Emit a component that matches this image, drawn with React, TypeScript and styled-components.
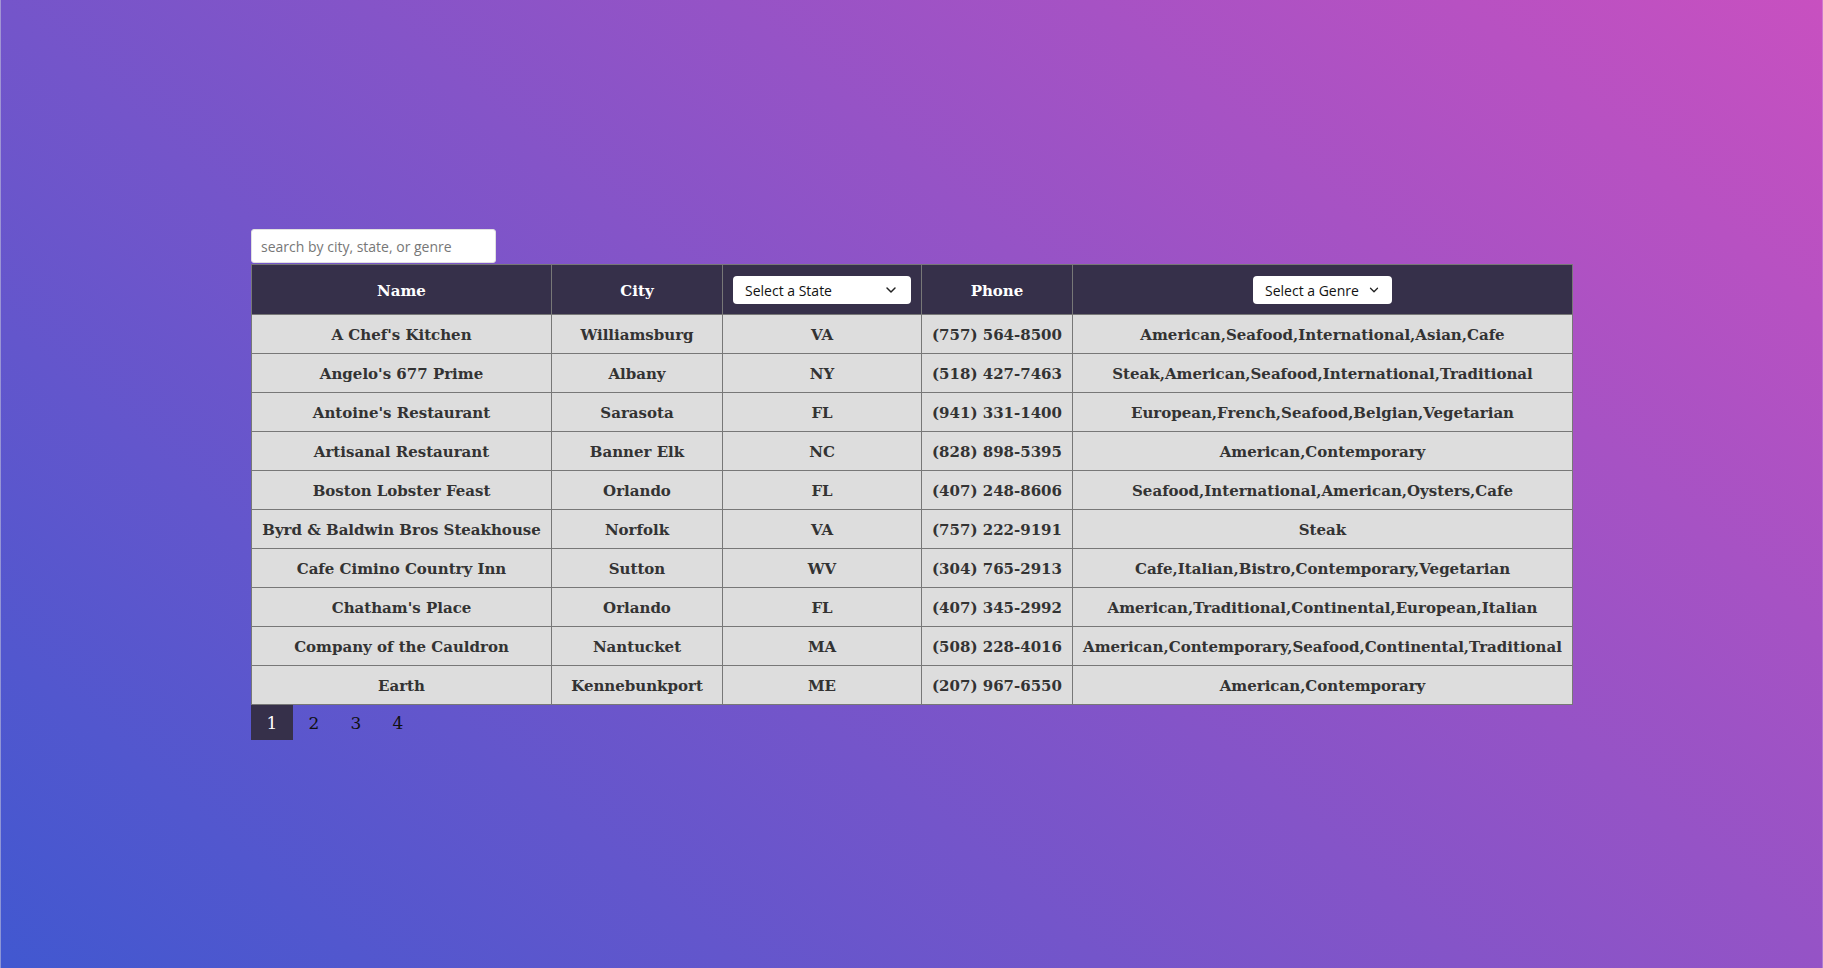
import React, { useState } from "react";
import styled, { createGlobalStyle } from "styled-components";
import { ChevronDown } from "lucide-react";

const GlobalStyle = createGlobalStyle`
  * { box-sizing: border-box; }
  html, body { margin: 0; padding: 0; }
  body {
    font-family: "DejaVu Serif", serif;
    min-height: 100vh;
    background: linear-gradient(41deg, #4158d0 0%, #c850c0 100%);
    background-attachment: fixed;
  }
`;

const Page = styled.div`
  min-height: 100vh;
  padding-top: 229px;
  display: flex;
  justify-content: center;
  border-left: 1px solid rgba(200, 200, 220, 0.55);
  border-right: 1px solid rgba(220, 200, 230, 0.35);
`;

const Container = styled.div`
  width: 1321px;
  display: flex;
  flex-direction: column;
  align-items: flex-start;
`;

const SearchInput = styled.input`
  width: 245px;
  height: 34px;
  border: 1px solid #e0e0e0;
  border-radius: 3px;
  background: #fff;
  padding: 0 9px;
  font-family: "Open Sans", "Noto Sans", sans-serif;
  font-size: 14px;
  color: #222;
  outline: none;
  margin-bottom: 1px;
  &::placeholder {
    color: #777;
  }
`;

const Table = styled.table`
  width: 1321px;
  border-collapse: collapse;
  table-layout: fixed;
`;

const HeadCell = styled.th<{ $w: number }>`
  width: ${(p) => p.$w}px;
  height: 50px;
  background: #36304a;
  color: #fff;
  font-family: "DejaVu Serif", serif;
  font-weight: bold;
  font-size: 15px;
  line-height: 18px;
  padding: 11px 10px 9px;
  border: 1px solid #777;
  text-align: center;
  vertical-align: middle;
`;

const Cell = styled.td`
  background: #dddddd;
  color: #333;
  font-family: "DejaVu Serif", serif;
  font-weight: bold;
  font-size: 15px;
  line-height: 18px;
  padding: 11px 4px 9px;
  border: 1px solid #777;
  text-align: center;
  white-space: nowrap;
`;

const SelectWrap = styled.div<{ $w?: number }>`
  position: relative;
  display: inline-block;
  width: ${(p) => (p.$w ? `${p.$w}px` : "100%")};
  height: 28px;
  margin-top: -1px;
  vertical-align: middle;
`;

const Select = styled.select`
  appearance: none;
  -webkit-appearance: none;
  width: 100%;
  height: 28px;
  border: none;
  border-radius: 4px;
  background: #fff;
  color: #111;
  font-family: "Open Sans", "Noto Sans", sans-serif;
  font-size: 14px;
  padding: 0 30px 0 12px;
  outline: none;
  display: block;
`;

const Chevron = styled.span<{ $right: number }>`
  position: absolute;
  right: ${(p) => p.$right}px;
  top: 50%;
  transform: translateY(-50%);
  display: flex;
  align-items: center;
  pointer-events: none;
  color: #222;
`;

const Pager = styled.ul`
  list-style: none;
  margin: 0;
  padding: 0;
  display: flex;
`;

const PageItem = styled.li<{ $active?: boolean }>`
  width: 42px;
  height: 35px;
  display: flex;
  align-items: center;
  justify-content: center;
  font-family: "DejaVu Serif", serif;
  font-size: 17px;
  color: ${(p) => (p.$active ? "#fff" : "#111")};
  background: ${(p) => (p.$active ? "#36304a" : "transparent")};
  cursor: pointer;
`;

type Row = [string, string, string, string, string];

const rows: Row[] = [
  ["A Chef's Kitchen", "Williamsburg", "VA", "(757) 564-8500", "American,Seafood,International,Asian,Cafe"],
  ["Angelo's 677 Prime", "Albany", "NY", "(518) 427-7463", "Steak,American,Seafood,International,Traditional"],
  ["Antoine's Restaurant", "Sarasota", "FL", "(941) 331-1400", "European,French,Seafood,Belgian,Vegetarian"],
  ["Artisanal Restaurant", "Banner Elk", "NC", "(828) 898-5395", "American,Contemporary"],
  ["Boston Lobster Feast", "Orlando", "FL", "(407) 248-8606", "Seafood,International,American,Oysters,Cafe"],
  ["Byrd & Baldwin Bros Steakhouse", "Norfolk", "VA", "(757) 222-9191", "Steak"],
  ["Cafe Cimino Country Inn", "Sutton", "WV", "(304) 765-2913", "Cafe,Italian,Bistro,Contemporary,Vegetarian"],
  ["Chatham's Place", "Orlando", "FL", "(407) 345-2992", "American,Traditional,Continental,European,Italian"],
  ["Company of the Cauldron", "Nantucket", "MA", "(508) 228-4016", "American,Contemporary,Seafood,Continental,Traditional"],
  ["Earth", "Kennebunkport", "ME", "(207) 967-6550", "American,Contemporary"],
];

const states = ["VA", "NY", "FL", "NC", "WV", "MA", "ME"];
const genres = ["American", "Seafood", "Steak", "Cafe", "Italian"];

export default function App() {
  const [page, setPage] = useState(1);
  const [search, setSearch] = useState("");
  return (
    <>
      <GlobalStyle />
      <Page>
        <Container>
          <SearchInput
            placeholder="search by city, state, or genre"
            value={search}
            onChange={(e) => setSearch(e.target.value)}
          />
          <Table>
            <thead>
              <tr>
                <HeadCell $w={300}>Name</HeadCell>
                <HeadCell $w={171}>City</HeadCell>
                <HeadCell $w={199}>
                  <SelectWrap>
                    <Select defaultValue="">
                      <option value="">Select a State</option>
                      {states.map((s) => (
                        <option key={s} value={s}>{s}</option>
                      ))}
                    </Select>
                    <Chevron $right={12}>
                      <ChevronDown size={16} strokeWidth={2.2} />
                    </Chevron>
                  </SelectWrap>
                </HeadCell>
                <HeadCell $w={151}>Phone</HeadCell>
                <HeadCell $w={500}>
                  <SelectWrap $w={139}>
                    <Select defaultValue="">
                      <option value="">Select a Genre</option>
                      {genres.map((g) => (
                        <option key={g} value={g}>{g}</option>
                      ))}
                    </Select>
                    <Chevron $right={11}>
                      <ChevronDown size={14} strokeWidth={2.2} />
                    </Chevron>
                  </SelectWrap>
                </HeadCell>
              </tr>
            </thead>
            <tbody>
              {rows.map((r) => (
                <tr key={r[0]}>
                  {r.map((c, i) => (
                    <Cell key={i}>{c}</Cell>
                  ))}
                </tr>
              ))}
            </tbody>
          </Table>
          <Pager>
            {[1, 2, 3, 4].map((n) => (
              <PageItem key={n} $active={n === page} onClick={() => setPage(n)}>
                {n}
              </PageItem>
            ))}
          </Pager>
        </Container>
      </Page>
    </>
  );
}
